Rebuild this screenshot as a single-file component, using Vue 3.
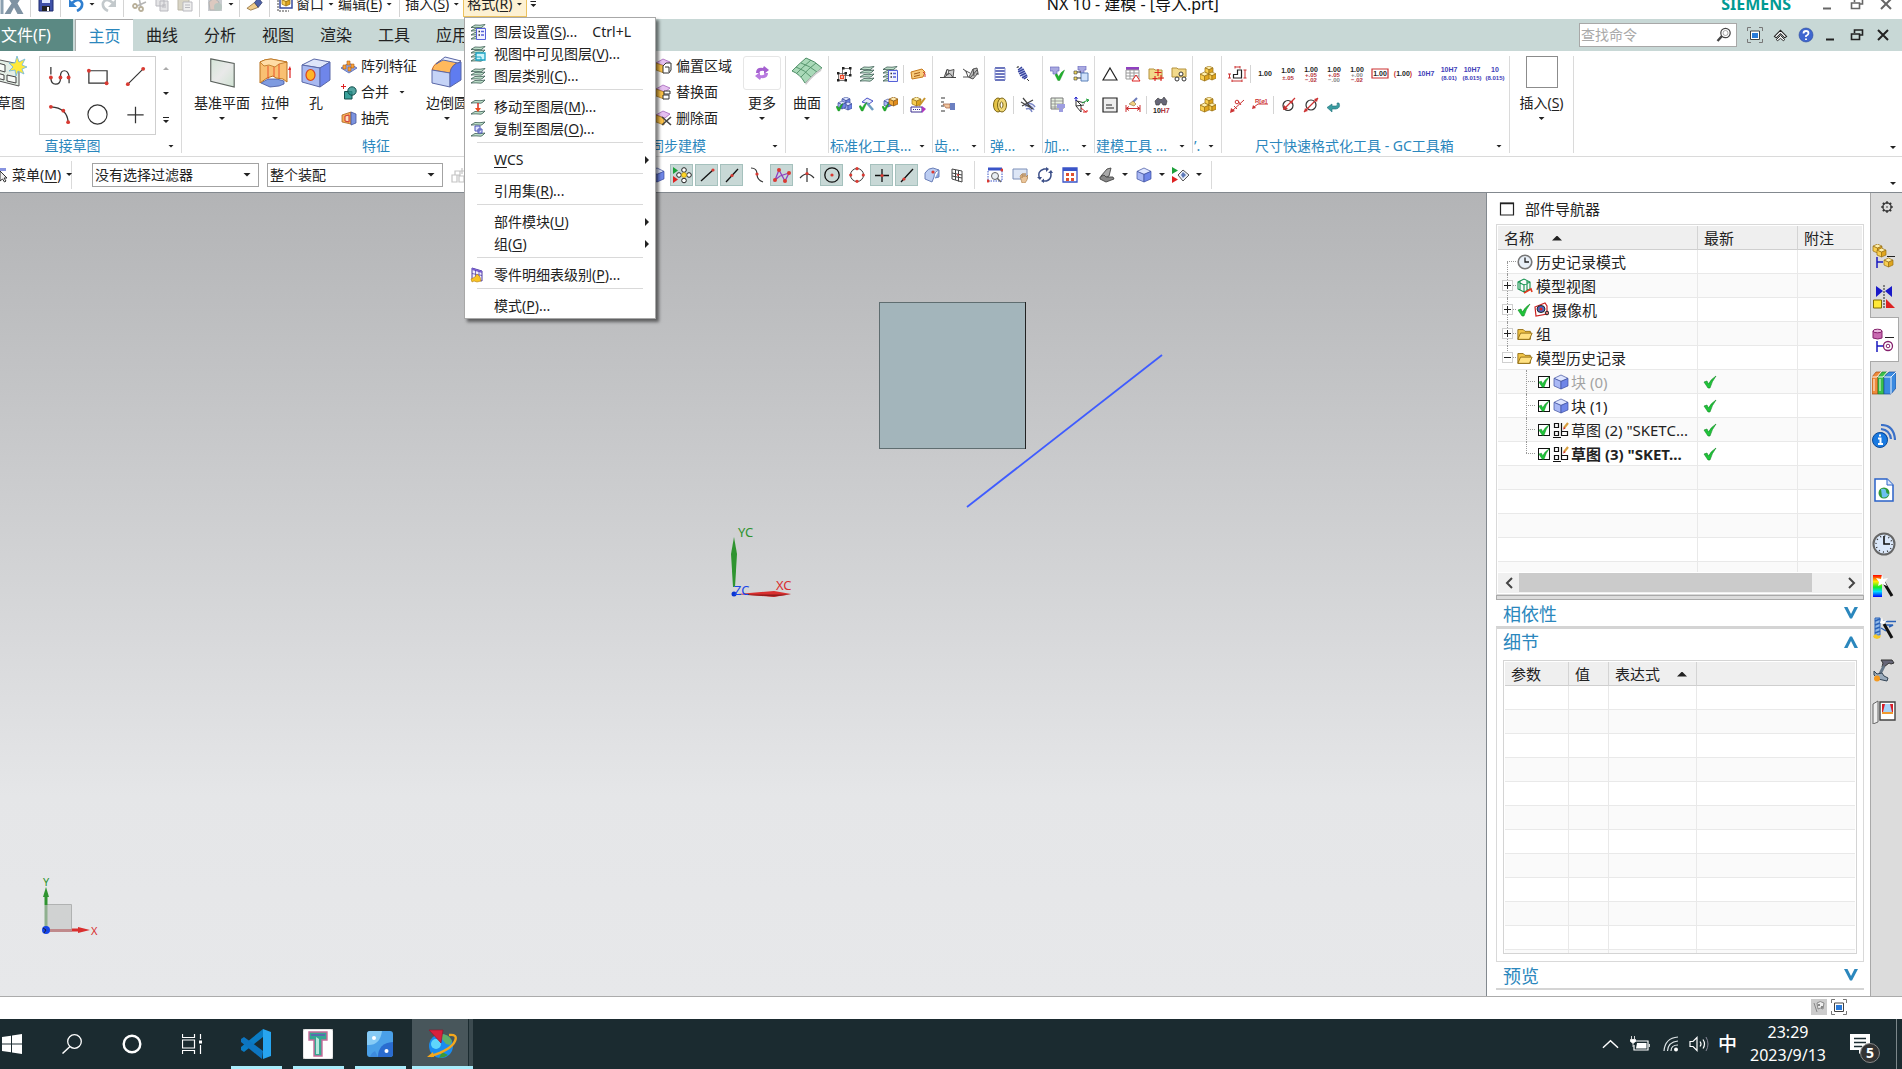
<script setup>
import { h } from 'vue'

const cube = (x, y, s, c = ['#dfe6ff', '#a9b8f5', '#6f86e8', '#3e4f9e']) => {
  const a = x + s / 2, b = x + s, q = y + s * 0.24, m = y + s * 0.46, d = y + s * 0.78, e = y + s
  return `<g stroke="${c[3]}" stroke-width=".7" stroke-linejoin="round"><path fill="${c[0]}" d="M${a} ${y}L${b} ${q}L${a} ${m}L${x} ${q}z"/><path fill="${c[1]}" d="M${x} ${q}L${a} ${m}V${e}L${x} ${d}z"/><path fill="${c[2]}" d="M${b} ${q}L${a} ${m}V${e}L${b} ${d}z"/></g>`
}
const gold = ['#fff0ae', '#f9cf52', '#dfa51f', '#9a7012']
const dot = (x, y, r = 1.6) => `<circle cx="${x}" cy="${y}" r="${r}" fill="#d93a32"/>`
const leaf = (y) => `<path d="M1 ${y + 3}Q4 ${y + 1} 5 ${y + 0.5}Q10 ${y + 1.2} 15 ${y}Q13 ${y + 2.4} 11 ${y + 3.2}Q6 ${y + 2.6} 1 ${y + 3}z" fill="#c4e6d0" stroke="#35564c" stroke-width=".8"/>`
const layers = leaf(12) + leaf(8) + leaf(4) + leaf(0.5)
const tick = (x, y, s = 1) => `<path d="M${x} ${y + 4 * s}l${2 * s} ${-1 * s}l${2 * s} ${3 * s}q${2 * s} ${-5 * s} ${6 * s} ${-7 * s}q${-2 * s} ${5 * s} ${-5 * s} ${11 * s}h${-2 * s}z" fill="#22b32e" stroke="#12821c" stroke-width=".4"/>`
const list = '<path d="M6.500 4.500h9v11h-9z" fill="#f2f3ff" stroke="#5560d8"/><path d="M8.500 7.500h1.500M8.500 11h1.500" stroke="#333" stroke-width="1.600"/><path d="M11 7.500h3M11 11h3" stroke="#5560d8" stroke-width="1.400"/>'
const num = (t, y = 10, c = '#222', s = 7) => `<text x="10" y="${y}" text-anchor="middle" font-family="Liberation Sans, sans-serif" font-weight="bold" font-size="${s}" fill="${c}">${t}</text>`
const hist = '<path d="M1 3h6l2 2h6v9H1z" fill="#f2c649" stroke="#8f6a10"/><path d="M1 14L4 7h13l-3 7z" fill="#ffe182" stroke="#8f6a10"/>'

const icons = {
  save: ['0 0 16 16', '<path d="M1 1h14v14H1z" fill="#3f51a8" stroke="#1f2c6e"/><path d="M4 1h8v6H4z" fill="#dfe8ff"/><path d="M4 10h8v5H4z" fill="#222"/><path d="M9 11h2v4H9z" fill="#fff"/>'],
  undo: ['0 0 16 16', '<path d="M4 7Q11 1 14 7Q15 12 9 15" fill="none" stroke="#2f7fd0" stroke-width="2.600"/><path d="M1 3v8h8z" fill="#2f7fd0"/>'],
  redo: ['0 0 16 16', '<path d="M12 7Q5 1 2 7Q1 12 7 15" fill="none" stroke="#c3c9cc" stroke-width="2.600"/><path d="M15 3v8H7z" fill="#c3c9cc"/>'],
  cut: ['0 0 16 16', '<path d="M8 2l2 9M15 6L6 10" stroke="#b5b5b5" stroke-width="1.600"/><circle cx="4" cy="10" r="2" fill="none" stroke="#b9b09a" stroke-width="1.800"/><circle cx="10" cy="13" r="2" fill="none" stroke="#b9b09a" stroke-width="1.800"/>'],
  copy: ['0 0 16 16', '<path d="M2 1h8v9H2zM6 5h8v10H6z" fill="#e4e4e6" stroke="#b9b9bf"/><path d="M8 9h4M8 11h4" stroke="#b9b9bf"/>'],
  paste: ['0 0 16 16', '<path d="M1 2h11v12H1z" fill="#d8d4c4" stroke="#bbb7a8"/><path d="M6 6h9v9H6z" fill="#eee" stroke="#b9b9bf"/><path d="M8 9h5M8 11.500h5" stroke="#b9b9bf"/>'],
  ghost: ['0 0 16 16', '<path d="M1 1h14v14H1z" fill="#c9ccd0"/><path d="M2 6l5-4 5 4-2 8H3z" fill="#dcc9c0" stroke="#b3b3b3"/><circle cx="11" cy="11" r="4" fill="#b9c6c0"/>'],
  brush: ['0 0 18 16', '<path d="M1 12l8-6 4 5-8 3z" fill="#f0cd8b" stroke="#8a6a3a" stroke-width=".8"/><path d="M9 6l4-5 4 5-4 5z" fill="#4e63a8" stroke="#2a3768" stroke-width=".8"/>'],
  win: ['0 0 16 16', '<path d="M3 1h12v11H3z" fill="#fff" stroke="#3a4ca0" stroke-width="1.500"/><path d="M1 4v11h11" fill="none" stroke="#444" stroke-dasharray="2 1"/>' + cube(5, 2, 8, gold)],
  layerSet: ['0 0 16 16', layers + list],
  layerView: ['0 0 16 16', layers + '<path d="M6 7h9v7H6z" fill="#c9f4fb" stroke="#1aa3c4" stroke-width="1.300"/><path d="M6 11h5v3" fill="none" stroke="#1aa3c4"/>'],
  layers: ['0 0 16 16', layers],
  layerMove: ['0 0 16 16', leaf(1) + leaf(12) + '<path d="M8 4v6" stroke="#d92b1f" stroke-width="1.500"/><path d="M5 9h6l-3 4z" fill="#f04a1a"/>'],
  layerCopy: ['0 0 16 16', leaf(1) + leaf(12) + '<path d="M5 5h5v5H5zM8 8h4v4H8z" fill="#dfe2ff" stroke="#4a54b8"/>'],
  partsList: ['0 0 16 16', '<path d="M2 1l10 3v10L2 12z" fill="#f3f0ff" stroke="#4b3aa0"/><path d="M2 1l10 3v2L2 3z" fill="#7a5fd0"/><path d="M5.500 3v9M9 4v9M2 6.500l10 2" stroke="#4b3aa0" stroke-width=".7"/><path d="M1 12l4-2 2-3 3 3 1 4-4 1-3-1-2 1z" fill="#f8c326" stroke="#b58010" stroke-width=".6"/>'],
  sketch: ['0 0 32 32', '<path d="M0 3l24 5v22L0 24z" fill="#e4eee6" stroke="#555"/><path d="M3 7l7 2v7l-7-2zM12 19l9 2v6l-9-2zM2 17l7 2v5l-7-2z" fill="#f7faf7" stroke="#444"/><path d="M22 0l2 6 6-3-3 6 5 2-5 2 2 5-6-3-2 5-1-6-6 1 4-4-4-4 6 0z" fill="#ffe93b" stroke="#6cb4e0" stroke-width=".8"/>'],
  spline: ['0 0 24 24', '<path d="M3 2v8M3 13q0 7 5 7t5-6v-2q0-6 4-6t5 6v7" fill="none" stroke="#333" stroke-width="1.300"/>' + dot(3, 13, 2) + dot(13, 13, 2) + dot(21.500, 13, 2)],
  rect: ['0 0 24 24', '<path d="M3 6h19v13H3z" fill="none" stroke="#333" stroke-width="1.300"/>' + dot(3, 6, 2) + dot(21.500, 19, 2)],
  line: ['0 0 24 24', '<path d="M4 20L20 4" stroke="#333" stroke-width="1.200"/>' + dot(4, 20, 2) + dot(20, 4, 2)],
  arc: ['0 0 24 24', '<path d="M3 4Q20 5 21 20" fill="none" stroke="#333" stroke-width="1.300"/>' + dot(3, 4, 2) + dot(16, 8, 2) + dot(21, 20, 2)],
  circle: ['0 0 24 24', '<circle cx="12" cy="12" r="10" fill="none" stroke="#333" stroke-width="1.200"/>'],
  plus: ['0 0 24 24', '<path d="M12 4v17M3.500 12.500h17" stroke="#333" stroke-width="1.300"/>'],
  datum: ['0 0 32 32', '<defs><linearGradient id="gd" x2="1" y2="1"><stop stop-color="#d5e6d8"/><stop offset=".5" stop-color="#e9e9e9"/><stop offset="1" stop-color="#cfe2d2"/></linearGradient></defs><path d="M4 2l25 5v25L4 26z" fill="url(#gd)" stroke="#5c635e" stroke-width="1.200"/>'],
  extrude: ['0 0 32 32', '<path d="M2 27l7-4h9l7 2v3l-5 2-9 1z" fill="#7f9be0" stroke="#44549a" stroke-width=".8"/><path d="M1 6q5-3 11-3l16 3v20l-4-3-7-1-3-2-6 2-7 5z" fill="#f9c072" stroke="#b9701c"/><path d="M1 6q5-3 11-3l16 3-8 2-4 3-6-2-5 1z" fill="#ffdca6" stroke="#b9701c" stroke-width=".8"/><path d="M9 10v13M15 11v10M20 8v14" stroke="#e8552d"/><path d="M31 22V12" stroke="#d22" stroke-width="1.200"/><path d="M29 14l2-4 1 4z" fill="#d22"/>'],
  hole: ['0 0 32 32', '<g stroke="#5a68a8"><path d="M2 9l12-6 16 3-10 6z" fill="#dfe6fa"/><path d="M2 9l18 3v19L2 26z" fill="#a9b9f0"/><path d="M20 12l10-6v18l-10 7z" fill="#6f86ea"/></g><ellipse cx="10.500" cy="19" rx="4.500" ry="5.500" fill="#ffb528" stroke="#d8421f" stroke-width="1.200"/>'],
  pattern: ['0 0 16 16', '<path d="M0 10l8-5 8 5-8 5z" fill="#8ea6ea" stroke="#5065b0" stroke-width=".8"/><g fill="#f8a23a" stroke="#b4631a" stroke-width=".6"><path d="M6 3h3v4H6zM2 7h3v4H2zM10 6h3v4h-3zM7 9h3v4H7z"/></g>'],
  unite: ['0 0 16 16', '<path d="M3.500 7.500h7.500V15H3.500z" fill="#3aa19b" stroke="#134f4d"/><circle cx="11" cy="7" r="4.200" fill="#2a8f8a" fill-opacity=".8" stroke="#134f4d"/><path d="M2.500 0v5M0 2.500h5" stroke="#d22"/>'],
  shell: ['0 0 16 16', '<path d="M1 5l9-3v12l-9-2z" fill="#f7ae55" stroke="#a86424" stroke-width=".8"/><path d="M4 6l4-1v7l-4-1z" fill="#fbe0c0" stroke="#c33"/><path d="M10 2l5 2v9l-5 2z" fill="#7b93df" stroke="#44549a" stroke-width=".8"/>'],
  blend: ['0 0 32 32', '<g stroke="#5a68a8"><path d="M1 14Q3 6 14 3l16 2Q20 8 19 17z" fill="#ffb95c" stroke="#c4611c"/><path d="M5 8L14 1l16 4-3 2L12 4z" fill="#e9eefc"/><path d="M1 14l18 3v14L1 27z" fill="#c5d3f6"/><path d="M19 17q1-9 11-11v18l-11 7z" fill="#5f7cf0"/></g>'],
  face1: ['0 0 16 16', '<path d="M0 5l7-4 7 3-5 4z" fill="#e5bff0" stroke="#9a56b0" stroke-width=".7"/><path d="M0 5l8 3v7l-8-3z" fill="#f9c14a" stroke="#a87516" stroke-width=".7"/><path d="M7 8l3-3h5v7l-2 3H7z" fill="#fff" stroke="#333"/><path d="M9 9h4v5" fill="none" stroke="#333"/>'],
  face2: ['0 0 16 16', '<path d="M0 5l7-4 7 3-5 4z" fill="#e5bff0" stroke="#9a56b0" stroke-width=".7"/><path d="M0 5l8 3v7l-8-3z" fill="#f9c14a" stroke="#a87516" stroke-width=".7"/><path d="M8 7h6v3H8zM7 11h6v4H7z" fill="#fff" stroke="#333"/>'],
  face3: ['0 0 16 16', '<path d="M0 5l7-4 7 3-5 4z" fill="#e5bff0" stroke="#9a56b0" stroke-width=".7"/><path d="M0 5l8 3v7l-8-3z" fill="#f9c14a" stroke="#a87516" stroke-width=".7"/><path d="M6 7l9 8M15 7l-9 8" stroke="#444" stroke-width="1.600"/>'],
  more: ['0 0 16 16', '<path d="M2 8Q2 2 9 3l1-2 5 4-5 4V6Q6 5 5 8z" fill="#a560d0"/><path d="M14 8q0 6-7 5l-1 2-5-4 5-4v3q4 1 5-2z" fill="#b97be0"/>'],
  surface: ['0 0 32 32', '<path d="M1 15Q8 8 15 2Q24 5 31 12Q23 17 14 27Q9 18 1 15z" fill="#a9d9b8" stroke="#4f8e67"/><path d="M5 11Q14 14 20 21M10 7Q19 10 26 16M6 17Q13 10 20 4M10 21Q17 13 25 7" fill="none" stroke="#4f8e67" stroke-width=".9"/><path d="M14 27Q23 17 31 12l-1 3Q22 20 15 29z" fill="#ccc"/>'],
  gc1: ['0 0 16 16', '<path d="M2.500 7.500h7v7h-7zM6.500 2.500h8v7h-8z" fill="#fff" stroke="#555" stroke-width=".8"/><path d="M4.500 9.500h3v3h-3z" fill="#fff" stroke="#f04a2a" stroke-width="1.400"/><g fill="#222"><path d="M1 6h2.500v2.500H1zM8.500 6H11v2.500H8.500zM1 13h2.500v2.500H1zM8.500 13H11v2.500H8.500zM13 1h2.500v2.500H13zM6 1h2.500v2.500H6zM13 8h2.500v2.500H13z"/></g>'],
  tag: ['0 0 16 16', '<path d="M1 6l11-3 3 3-2 5-11 2z" fill="#f9cb7a" stroke="#c67a1c"/><path d="M4 8l6-1.500M4 10.500l6-1.500" stroke="#a35b16"/><path d="M13 6q3 1 2 5" fill="none" stroke="#c33"/>'],
  chkBlue: ['0 0 16 16', cube(6, 0, 8) + cube(8, 5, 8) + cube(2, 4, 8) + tick(0, 7, .7)],
  chkTool: ['0 0 16 16', '<path d="M3 5l5-4 6 3-4 3z" fill="#e9e9f9" stroke="#4a54c8"/><path d="M8 6l6 7" stroke="#6e9dc0" stroke-width="2.500"/>' + tick(0, 6, .8)],
  chkGold: ['0 0 16 16', cube(2, 2, 8) + cube(7, 0, 9, ['#ffe9b0', '#f2a93a', '#e08b1c', '#8f5a10']) + tick(0, 7, .7)],
  boxEdit: ['0 0 16 16', cube(2, 0, 9, gold) + '<path d="M15 1L9 9" stroke="#c8952c" stroke-width="2"/><path d="M1 10h11v5H1z" fill="#fff" stroke="#3b2d90"/><path d="M3 12.500h7" stroke="#3b2d90" stroke-dasharray="1 1"/><path d="M12 9l4 3-4 4z" fill="#b03ac0"/>'],
  gear1: ['0 0 16 16', '<path d="M0 11.500h4l3-8 3 1 4-1-1 8zM7 3.500l-1 5 4-1 3 4M4 11.500l5-4M9 4l-1 4" fill="#ccc" stroke="#444" stroke-width=".9"/><path d="M11 11.500h5" stroke="#444"/>'],
  gear2: ['0 0 16 16', '<path d="M0 3l3 2 2 6 5 2 5-6-1-5-4 1-4 8M3 5l4 2M10 3l1 7M7 12l7-8M0 11h5M13 8h3" fill="#bbb" stroke="#444" stroke-width=".9"/>'],
  gearHand: ['0 0 16 16', '<path d="M1 1h4M1 5h3M1 9h3M1 14h4" stroke="#333"/><path d="M3 7h7v4H6z" fill="#f2c6a0" stroke="#9c5a3c" stroke-width=".7"/><path d="M10 6h5v7h-5z" fill="#6b7fc0"/>'],
  spring1: ['0 0 16 16', '<path d="M3 2h10M3 5h10M3 8h10M3 11h10M3 14h10" stroke="#3c4aa8" stroke-width="1.700"/><path d="M3 2v12M13 2v12" stroke="#8c96d8"/>'],
  spring2: ['0 0 16 16', '<path d="M5 3l6 9" stroke="#9aa4dc" stroke-width="5"/><path d="M3 4l4-3M3 6l6-3M4 8l6-3M5 10l6-3M7 12l5-3M9 13l3-2" stroke="#2f3c98" stroke-width="1.200"/><path d="M12 13l2 2M2 2q0-2 2-1" stroke="#333" fill="none"/>'],
  spring3: ['0 0 16 16', '<ellipse cx="6" cy="8" rx="4.500" ry="7" fill="#e4c347" stroke="#7b6414"/><ellipse cx="10" cy="8" rx="4.500" ry="7" fill="#f0d878" stroke="#7b6414"/><ellipse cx="9.500" cy="8" rx="1.500" ry="3" fill="#fff" stroke="#7b6414"/>'],
  spring4: ['0 0 16 16', '<path d="M6 7q6-2 9 3M5 9q6-2 9 4M6 12q4-2 6 3" fill="none" stroke="#7c88c8" stroke-width="1.500"/><path d="M3 1l9 11M13 3L2 9M1 5l12 7" stroke="#444" stroke-width="1.200"/>'],
  cam1: ['0 0 16 16', '<path d="M0 1h9v4H7v3H3V5H0z" fill="#a9a9e0" stroke="#6b6bbf" stroke-width=".7"/>' + tick(5, 5, .95)],
  cam2: ['0 0 16 16', '<path d="M5 0h8v4h-2v3H7V4H5z" fill="#a9a9e0" stroke="#6b6bbf" stroke-width=".7"/><path d="M8 7h7v8H8z" fill="#cfe2fb" stroke="#5a80b8"/><path d="M1 5h3v3H1zM1 11h3v3H1z" fill="#f5dc60" stroke="#333" stroke-width=".6"/><path d="M4 6h4M4 12h4" stroke="#333"/>'],
  cam3: ['0 0 16 16', '<path d="M1 1h12v11H1z" fill="#e9f2e2" stroke="#777"/><path d="M1 4h12M1 7h12M1 10h12M5 1v11" stroke="#888" stroke-width=".8"/><path d="M7 7h8v4h-2v4H9v-4H7z" fill="#9d9de0"/>'],
  cam4: ['0 0 16 16', '<path d="M3 3v6l5 6V8zM3 9l8-1M4 4l8 2" fill="none" stroke="#333"/><path d="M9 6l6-3M13 2l3 1-2 2" stroke="#1da03a" fill="none"/><path d="M8 11l5 4M10 15h4v-2" stroke="#d22" fill="none"/><path d="M3 0v4M1.500 2L3 0l1.500 2" stroke="#22c" fill="none"/>'],
  tri: ['0 0 16 16', '<path d="M8 2l7 12H1z" fill="none" stroke="#222" stroke-width="1.200"/>'],
  tbl: ['0 0 16 16', '<path d="M1 1h13v3H1z" fill="#9040c0"/><path d="M1 4h13v9H1zM1 7h13M1 10h13M5 4v9M9 4v9" fill="none" stroke="#999"/><path d="M11 9l4 6H7z" fill="#fff" stroke="#d22"/>'],
  folderX: ['0 0 16 16', '<path d="M1 3h5l1 1h7v9H1z" fill="#f2d98a" stroke="#b4923c"/><path d="M10 3v7M6.500 6.500h7M13 9v6M10 12h6M7 10v5M4.500 12.500h5" stroke="#d22" stroke-width="1.100"/>'],
  folderO: ['0 0 16 16', '<path d="M1 2h5l1 1h8v8H1z" fill="#f2d98a" stroke="#b4923c"/><g fill="#fff" stroke="#333"><circle cx="10" cy="8" r="2"/><circle cx="6" cy="13" r="2"/><circle cx="13" cy="13" r="2"/></g>'],
  note: ['0 0 16 16', '<path d="M1 1h14v14H1z" fill="#eee" stroke="#222" stroke-width="1.200"/><path d="M4 8h6M4 11h8" stroke="#222"/>'],
  dimBrush: ['0 0 16 16', '<path d="M1 8v7M15 8v7M1 11.500h14" stroke="#c33"/><path d="M4 9.500l-3 2 3 2M12 9.500l3 2-3 2" fill="none" stroke="#c33"/><path d="M12 1L8 5" stroke="#6b7ab8" stroke-width="2"/><path d="M4 7l4-3 3 3-2 2z" fill="#f0d080" stroke="#8a6a3a" stroke-width=".6"/>'],
  find: ['0 0 20 16', '<path d="M4 4l3-3 2 1.500h2L13 0l3 4-1 4h-3l-2-3-2 3H5z" fill="#667" stroke="#333" stroke-width=".6"/><text x="2" y="16" font-family="Liberation Sans, sans-serif" font-weight="bold" font-size="7" fill="#222">10<tspan fill="#b5333c">H7</tspan></text>'],
  cubes: ['0 0 16 16', cube(5, 0, 8, gold) + cube(8, 6, 8, gold) + cube(0, 6, 9, gold)],
  dim: ['0 0 20 16', '<path d="M6.500 12V8.500h4V4h4v8z" fill="none" stroke="#222" stroke-width="1.200"/><path d="M8 1h5M8 0v2.500M13 0v2.500M18 4v8M16.500 4h3M16.500 12h3M5 15h10M5 13.500v2.500M15 13.500v2.500M2.500 8v4M1 8h3M1 12h3" stroke="#c33"/>'],
  d1: ['0 0 20 16', num('1.00')],
  d2: ['0 0 20 16', num('1.00', 7) + num('±.05', 14, '#b5333c', 6)],
  d3: ['0 0 20 16', num('1.00', 6) + num('+.05', 11, '#b5333c', 6) + num('−.02', 16, '#b5333c', 6)],
  d4: ['0 0 20 16', num('1.00', 6) + num('+.05', 11, '#b5333c', 6) + num('−.00', 16, '#888', 6)],
  d5: ['0 0 20 16', num('1.00', 6) + num('+.00', 11, '#888', 6) + num('−.02', 16, '#b5333c', 6)],
  d6: ['0 0 20 16', '<path d="M2 3h16v9H2z" fill="none" stroke="#c33" stroke-width="1.200"/>' + num('1.00')],
  d7: ['0 0 20 16', num('<tspan fill="#c33">(</tspan>1.00<tspan fill="#c33">)</tspan>')],
  d8: ['0 0 20 16', num('10H7', 10, '#4040b8')],
  d9: ['0 0 20 16', num('10H7', 6, '#4040b8') + num('(8.01)', 14, '#4040b8', 6)],
  d10: ['0 0 20 16', num('10H7', 6, '#4040b8') + num('(8.015)', 14, '#4040b8', 6)],
  d11: ['0 0 20 16', num('10', 6, '#4040b8') + num('(8.015)', 14, '#4040b8', 6)],
  rad1: ['0 0 16 16', '<path d="M3 14L15 3M5 9l3 3M9 4l3 4" stroke="#c33"/><path d="M1 16l1-5 4 3z" fill="#c33"/><circle cx="8" cy="5" r="1.800" fill="none" stroke="#c33"/>'],
  rad2: ['0 0 16 16', '<path d="M2 10l4-3h10" fill="none" stroke="#c33"/><path d="M0 12l1-4 3 3z" fill="#c33"/><text x="3" y="6" font-family="Liberation Sans, sans-serif" font-size="6" font-weight="bold" fill="#c33">R[ø]</text>'],
  dia1: ['0 0 16 16', '<circle cx="8" cy="8.500" r="5" fill="none" stroke="#333" stroke-width="1.200"/><path d="M4 12L15 1" stroke="#c33" stroke-width="1.300"/><path d="M3 13l1-5 4 4zM13 4l-1 3-3-3z" fill="#c33"/>'],
  dia2: ['0 0 16 16', '<circle cx="8" cy="8" r="5" fill="none" stroke="#333" stroke-width="1.200"/><path d="M1 15L15 1" stroke="#c33" stroke-width="1.300"/><path d="M15 1l-1 4-3-3zM1 15l1-4 3 3z" fill="#c33"/>'],
  back: ['0 0 16 16', '<path d="M13 6q2 5-3 6H6v3L1 10.500 6 7v2h4q2 0 1-3z" fill="#3a9ca0" stroke="#20707a" stroke-width=".6"/>'],
  menuI: ['0 0 16 16', '<path d="M0 1h14v3H0z" fill="#8894e0"/><path d="M0 6h8M0 9h8M0 12h8" stroke="#555"/><path d="M8 4v10l2.500-2 2 3 1.500-1-2-3h3z" fill="#eee" stroke="#333"/>'],
  filt: ['0 0 16 16', '<path d="M1 8h5v7H1zM8 9h5v6H8zM4 4h5v4H4zM11 1v6M8 4h6" fill="none" stroke="#c4c4c4" stroke-width="1.200"/>'],
  bcube: ['0 0 16 16', cube(1, 1, 14)],
  snap: ['0 0 20 20', '<path d="M1 2l5 3.500-5 3.500z" fill="#1da03a"/><path d="M1 11l5 3.500-5 3.500z" fill="#d22"/><g fill="#fff" stroke="#222"><circle cx="12" cy="5" r="2.300"/><circle cx="12" cy="15.500" r="2.300"/><circle cx="7" cy="10" r="2.300"/><circle cx="17" cy="10" r="2.300"/></g><circle cx="12" cy="10" r="2.500" fill="#ffd62a" stroke="#a80" stroke-width=".5"/>'],
  s1: ['0 0 16 16', '<path d="M2 14L14 3" stroke="#111" stroke-width="1.300"/>' + dot(14, 3)],
  s2: ['0 0 16 16', '<path d="M2 15L14 2" stroke="#111" stroke-width="1.300"/>' + dot(8, 8.500)],
  s3: ['0 0 16 16', '<path d="M2 1q6 0 6 6t6 8" fill="none" stroke="#333" stroke-width="1.200"/>' + dot(8, 7)],
  s4: ['0 0 18 16', '<path d="M2 13L6 3l6 11 4-8-9 3z" fill="none" stroke="#9040c0" stroke-width="1.300"/>' + dot(2, 13, 2) + dot(6, 3, 2) + dot(12, 14, 2) + dot(16, 6, 2)],
  s5: ['0 0 16 16', '<path d="M8 1v14M1 11q7-8 14 0" fill="none" stroke="#333" stroke-width="1.200"/>' + dot(8, 6.500)],
  s6: ['0 0 16 16', '<circle cx="8" cy="8" r="7.200" fill="none" stroke="#111" stroke-width="1.300"/>' + dot(8, 8)],
  s7: ['0 0 16 16', '<circle cx="8" cy="8" r="6.500" fill="none" stroke="#333"/>' + dot(8, 1.700) + dot(8, 14.300) + dot(1.700, 8) + dot(14.300, 8)],
  s8: ['0 0 16 16', '<path d="M8 2v13M1 8.500h14" stroke="#111" stroke-width="1.300"/>' + dot(8, 8.500)],
  s9: ['0 0 16 16', '<path d="M2 15L14 2" stroke="#111" stroke-width="1.300"/>' + dot(5, 12)],
  s10: ['0 0 16 16', '<path d="M1 6q3-5 8-5l6 2q-5 2-5 7l-2 5-7-3z" fill="#bccdf2" stroke="#6a7fb8"/><path d="M15 3v7l-4 1" fill="#8ea6e0" stroke="#6a7fb8"/>' + dot(9, 5)],
  s11: ['0 0 16 16', '<path d="M3 2l10 2v11L3 12zM6.500 3v10M9.500 3.500v11M3 6l10 2M3 9l10 2" fill="none" stroke="#444"/>' + dot(9, 8, 1)],
  v1: ['0 0 16 16', '<path d="M1 2h14" stroke="#3a54c8" stroke-width="3"/><path d="M1 4v10h14V4" fill="none" stroke="#3a54c8" stroke-dasharray="1.500 1"/><circle cx="8" cy="9" r="3.500" fill="#e8eef2" stroke="#666"/><path d="M10 11l4 4" stroke="#666" stroke-width="1.500"/>' + dot(1, 14) + dot(15, 3)],
  v2: ['0 0 16 16', '<path d="M1 2h14v10H1z" fill="#dde6f6" stroke="#7d8fb8"/><path d="M8 9l2-2v4l1-5 1 4 1-4 1 4 2-2-1 5-2 3h-3z" fill="#e9c49a" stroke="#a8763c" stroke-width=".6"/>'],
  v3: ['0 0 16 16', '<path d="M2.500 11Q0 4 7 2h2M13.500 5q2 7-4 9H7" fill="none" stroke="#3c4f88" stroke-width="1.500"/><path d="M9 0l3 2-3 3zM7 11.500l-3 2.500 3 2zM0 10l3 3 2-3zM11 6l3-3 2 3z" fill="#3c4f88"/>'],
  v4: ['0 0 16 16', '<path d="M1 1h14v14H1z" fill="#fff" stroke="#3a54c8" stroke-width="1.300"/><path d="M1 2.500h14" stroke="#3a54c8" stroke-width="3"/><path d="M4 6h3v3H4zM9 6h3v3H9zM4 11h3v3H4zM9 11h3v3H9z" fill="#e05030"/>'],
  v5: ['0 0 16 16', '<path d="M2 9l6-7 4-1-2 8-4 2z" fill="#aaa" stroke="#444" stroke-width=".9"/><path d="M1 10l4-2 2 2h7l1 2-8 3-6-3z" fill="#888" stroke="#444" stroke-width=".9"/>'],
  v6: ['0 0 18 16', '<path d="M0 0l6 3.500L0 7z" fill="#1da03a"/><path d="M0 9l6 3.500L0 16z" fill="#d22"/><path d="M6 8l5-5 6 5-6 6z" fill="#e8eef8" stroke="#555"/><path d="M11 5l3 3-3 3-2-3z" fill="#5d79b8"/>'],
  fit: ['0 0 16 16', '<path d="M.500 4V.500H4M12 .500h3.500V4M15.500 12v3.500H12M4 15.500H.500V12" fill="none" stroke="#777"/><path d="M3.500 4h9v8.500h-9z" fill="#fff" stroke="#444"/><path d="M5 6h6v5H5z" fill="#2a7ad8"/>'],
  flag: ['0 0 16 16', '<path d="M0 0h16v16H0z" fill="#ccc"/><path d="M3 4l3 9M6 4q3-3 7 0l-1 6q-3-2-5 0z" fill="#eee" stroke="#888"/><path d="M7 5h2v2H7zM10 7h2v2h-2z" fill="#888"/>'],
  up2: ['0 0 16 16', '<path d="M1.500 9L8 2.500 14.500 9l-2 1.500L8 6l-4.500 4.500z" fill="#fff" stroke="#222" stroke-width="1.100"/><path d="M3.500 12.500L8 8l4.500 4.500-1.500 1L8 11l-3 2.500z" fill="#fff" stroke="#222"/>'],
  help: ['0 0 16 16', '<circle cx="8" cy="8" r="7" fill="#3f66cf" stroke="#2a489a" stroke-width=".6"/><path d="M5.500 6.500q0-2.500 2.500-2.500t2.500 2.200Q10.500 7.500 8 9v1M8 11.500v1.500" fill="none" stroke="#fff" stroke-width="1.800"/>'],
  mag: ['0 0 16 16', '<circle cx="9.500" cy="6" r="4.700" fill="#fff" stroke="#444" stroke-width="1.200"/><circle cx="9.500" cy="6" r="2.500" fill="none" stroke="#888" stroke-width=".7"/><path d="M6 9l-4.500 5" stroke="#444" stroke-width="2.400"/>'],
  min: ['0 0 14 14', '<path d="M2 11.500h8" stroke="currentColor" stroke-width="2"/>'],
  restore: ['0 0 14 14', '<path d="M4.500 5V2h8v5H10" fill="none" stroke="currentColor" stroke-width="1.600"/><path d="M1.500 6h8v5.500h-8z" fill="none" stroke="currentColor" stroke-width="1.600"/>'],
  close: ['0 0 14 14', '<path d="M2 2l10 10M12 2L2 12" stroke="currentColor" stroke-width="2"/>'],
  frame: ['0 0 16 16', '<path d="M1.500 2h13v12h-13z" fill="#fff" stroke="#222" stroke-width="1.200"/><path d="M1 2.500h14" stroke="#222" stroke-width="1.500"/>'],
  clock: ['0 0 16 16', '<circle cx="8" cy="8" r="6.800" fill="#e9f0f8" stroke="#777" stroke-width="1.600"/><path d="M8 3.500V8h4" fill="none" stroke="#222" stroke-width="1.300"/>'],
  model: ['0 0 16 16', '<path d="M1 4l6-3 6 3v7l-6 3-6-3zM1 4l6 3 6-3M7 7v7M3 2.500v9M10 3v9" fill="none" stroke="#13924e" stroke-width="1.100"/><path d="M7 15l7-4 1 3" fill="none" stroke="#e03a20" stroke-width="1.600"/>'],
  camera: ['0 0 16 16', '<path d="M2 5l10-4 2 3v8L3 14z" fill="#fff" stroke="#c22" stroke-width="1.200"/><ellipse cx="8" cy="7" rx="4" ry="3.500" fill="#5065c0" stroke="#222"/><circle cx="8" cy="7" r="1.500" fill="#d22"/><circle cx="14" cy="11" r="1.800" fill="none" stroke="#222"/>'],
  folder: ['0 0 18 16', hist],
  block: ['0 0 16 16', cube(1, 1, 14)],
  skt: ['0 0 16 16', '<path d="M1.500 1.500h4v4h-4zM1.500 9.500h4v4h-4zM8.500 1v12.500h6v-4h-6M0 15.500h8" fill="none" stroke="#111" stroke-width="1.200"/><path d="M15 1l-4 5" stroke="#d8a040" stroke-width="2.200"/><path d="M11 5l-1 2.500 2.500-1z" fill="#c22"/>'],
  ok: ['0 0 14 14', '<path d="M1 7l3-1 1.500 3Q8 4 13 1Q9 6 7 13H5z" fill="#1fc43a" stroke="#128a24" stroke-width=".6"/>'],
  chevD: ['0 0 16 14', '<path d="M1 1h3.500L8 8l3.500-7H15L9 12.500H7z" fill="#2b87bd"/>'],
  chevU: ['0 0 16 14', '<path d="M1 13h3.500L8 6l3.500 7H15L9 1.500H7z" fill="#2b87bd"/>'],
  cog: ['0 0 24 24', '<circle cx="12" cy="12" r="5" fill="none" stroke="#333" stroke-width="1.500"/><path d="M12 5v3M12 16v3M5 12h3M16 12h3M7 7l2 2M15 15l2 2M17 7l-2 2M9 15l-2 2" stroke="#333" stroke-width="2"/><circle cx="12" cy="12" r="1" fill="#333"/>'],
  asm: ['0 0 24 24', cube(1, 0, 9, gold) + cube(5, 4, 9, gold) + '<path d="M5 13v11M5 18h6" stroke="#1a1ac0" stroke-width="1.500"/><path d="M15 12.500h8" stroke="#222"/>' + cube(12, 14, 9, gold)],
  mirror: ['0 0 24 24', '<path d="M4 1l7 5-7 6zM20 1l-7 5 7 6z" fill="#1a1ac8"/><path d="M12 0v24" stroke="#222" stroke-dasharray="2 1"/><path d="M1.500 15h8v8h-8z" fill="#ffe838" stroke="#806c00"/><path d="M14 14l9 9h-9z" fill="#d22"/>'],
  partNav: ['0 0 24 24', '<path d="M1 3v7q5 2 9 0V3z" fill="#c86ab0" stroke="#85206c"/><ellipse cx="5.500" cy="3" rx="4.500" ry="1.800" fill="#e9b8dc" stroke="#85206c"/><path d="M5 13v11M5 18h6" stroke="#1a1ac0" stroke-width="1.500"/><path d="M13 9.500h9" stroke="#222"/><circle cx="16" cy="18" r="4.500" fill="#fff" stroke="#85206c" stroke-width="1.300"/><circle cx="16" cy="18" r="1.800" fill="none" stroke="#85206c"/>'],
  books: ['0 0 24 24', '<path d="M0 6l4-5h5L6 6v17H0z" fill="#f08a3a" stroke="#a04a10" stroke-width=".7"/><path d="M6 6l4-5h5l-3 5v17H6z" fill="#3ac04a" stroke="#1a7a28" stroke-width=".7"/><path d="M12 6l5-5h7v16l-5 6h-7z" fill="#3a8ae0" stroke="#1a4a98" stroke-width=".7"/><path d="M0 6h5l4-5M6 6h5l4-5M12 6h7l5-5M19 6v17M2 8v12M8 8v12" fill="none" stroke="#fff" stroke-width=".9"/>'],
  info: ['0 0 24 24', '<path d="M9 1q13 0 14 15M9 5q9 1 10 10M9 9q5 1 6 6" fill="none" stroke="#3a70c8" stroke-width="2.200"/><circle cx="8" cy="16" r="7.500" fill="#1a7ae0" stroke="#0c4a98"/><path d="M8 10.500v2M6 14.500h2.500V20M6 20h5" stroke="#fff" stroke-width="2" fill="none"/>'],
  doc: ['0 0 24 24', '<path d="M3 1h12l6 6v16H3z" fill="#fff" stroke="#2a62c8" stroke-width="1.500"/><path d="M15 1v6h6" fill="#dce8fb" stroke="#2a62c8"/><circle cx="12" cy="15" r="5.500" fill="#2e9a3a"/><path d="M9 11q5-1 5 2t3 3q-3 5-7 3z" fill="#6cc0f0"/>'],
  bigClock: ['0 0 24 24', '<circle cx="12" cy="12" r="10.500" fill="#dbe8fa" stroke="#666" stroke-width="2"/><path d="M12 4v8h6" fill="none" stroke="#111" stroke-width="1.600"/><circle cx="12" cy="12" r="8" fill="none" stroke="#333" stroke-width="1.500" stroke-dasharray="1 3.200"/>'],
  rainbow: ['0 0 24 24', '<defs><linearGradient id="rb" x2="0" y2="1"><stop stop-color="#f00"/><stop offset=".3" stop-color="#fe0"/><stop offset=".55" stop-color="#1e2"/><stop offset=".75" stop-color="#0df"/><stop offset="1" stop-color="#00f"/></linearGradient></defs><path d="M1 1h9v22H1z" fill="url(#rb)"/><path d="M11 7l9 15" stroke="#111" stroke-width="3"/><path d="M10 0l1 5 5-1-3 4 2 4-5-2-4 2 1-4-3-4 5 1z" fill="#fff"/>'],
  wand: ['0 0 24 24', '<path d="M3 2h5v17H3z" fill="#8fb8e8" stroke="#2a62b8"/><path d="M3 5l5-2M3 9l5-2M3 13l5-2M3 17l5-2M9 5.500h15M13 9h8l-4 2M9 12l5 3" stroke="#2a62b8" stroke-width="1.400" fill="none"/><path d="M1 20l3-2 2 2 3-1-1 3-3 1-3-1z" fill="#f5c92a"/><path d="M12 8l8 14" stroke="#111" stroke-width="3"/><path d="M10 1l1 4 4-1-3 4-4-1z" fill="#fff"/>'],
  robot: ['0 0 24 24', '<path d="M9 2h11l2 3-3 1-2-1-5 4h-2l1-4z" fill="#667" stroke="#333"/><path d="M12 8l-4 8" stroke="#678" stroke-width="3"/><path d="M2 13l3 3 5-1 2 3 4 2-1 3-9-2-4-4z" fill="#9ab" stroke="#345"/><circle cx="5" cy="20.500" r="3" fill="#f59a20"/>'],
  gallery: ['0 0 24 24', '<path d="M8 2h15v18H8z" fill="#fff" stroke="#444" stroke-width="1.400"/><path d="M10 4h11v10H10z" fill="#d81e28"/><path d="M13 4h5l2 8H11z" fill="#a8d4fa"/><path d="M10 12h11v2H10z" fill="#f09a30"/><path d="M6 1v21l-5 2V4z" fill="#eee" stroke="#666"/>'],
  start: ['0 0 20 20', '<path fill="#fff" d="M0 3l9-1.300V9.500H0zM10 1.500L20 0v9.500H10zM0 10.500h9v7.800L0 17zM10 10.500h10V20l-10-1.500z"/>'],
  tsearch: ['0 0 20 20', '<circle cx="12.500" cy="7.500" r="6.800" fill="none" stroke="#fff" stroke-width="1.300"/><path d="M8 12.500L.500 19.500" stroke="#fff" stroke-width="1.500"/>'],
  cortana: ['0 0 20 20', '<circle cx="10" cy="10" r="8.300" fill="none" stroke="#fff" stroke-width="2.400"/>'],
  taskview: ['0 0 20 20', '<path d="M.500 0v3.500h12V0M.500 20v-3.500h12V20M.500 6h12v8H.500zM18.500 0v5M18.500 11v9" fill="none" stroke="#fff" stroke-width="1.200"/><path d="M17 6.500h3v3h-3z" fill="#fff"/>'],
  code: ['0 0 30 30', '<path d="M22 8L3 23l-3-2v-3L22 0z" fill="#0a7cc4"/><path d="M3 8L0 10v3l21 17 1-8z" fill="#0d75c0"/><path d="M22 0l8 3v24l-8 3z" fill="#27a5f0"/>'],
  typora: ['0 0 30 30', '<rect width="30" height="30" rx="2" fill="#fff" stroke="#ccc"/><path d="M6 3h18v8h-5v16h-8V11H6z" fill="#35a893" stroke="#c86a9a" stroke-width="1.400"/><path d="M8 5h14v2H8z" fill="#5a6ab0"/><path d="M13 8l3 2v15h-3z" fill="#b5e6dc"/>'],
  photo: ['0 0 26 26', '<rect width="26" height="26" rx="3" fill="#4aa0e8"/><path d="M0 14Q13 15 15 0H3Q0 0 0 3z" fill="#86cbf6"/><path d="M11 26q0-14 15-15v12q0 3-3 3z" fill="#2a6cd0"/><path d="M3 26q1-4 5-6l3 6z" fill="#2a6cd0" opacity=".4"/><circle cx="7" cy="7" r="2" fill="#fff"/><circle cx="19.500" cy="20" r="2" fill="#fff"/>'],
  nx: ['0 0 30 30', '<circle cx="14" cy="17" r="12" fill="#1a8cf0"/><path d="M14 5q8 0 11 7l-2 4-4-1-4-5z" fill="#5fae6a"/><path d="M12 29l3-6 6 3q-4 3-9 3z" fill="#3a9a3a"/><circle cx="9" cy="15" r="5" fill="#6fe8ff" opacity=".8"/><path d="M22 6q9-1 6 6-4 9-24 15" fill="none" stroke="#f5a81c" stroke-width="2.400"/><path d="M0 28l6-5 1 5z" fill="#f5a81c"/><path d="M2 1l14 0-2 13z" fill="#d8203c" stroke="#90102a" stroke-width=".6"/>'],
  tup: ['0 0 18 10', '<path d="M1 9l8-7.500L17 9" fill="none" stroke="#fff" stroke-width="1.500"/>'],
  batt: ['0 0 20 16', '<path d="M5 5h13v9H4V9" fill="none" stroke="#fff" stroke-width="1.200"/><path d="M7 7h9.500v5.500H6z" fill="#fff"/><path d="M19.300 8v3" stroke="#fff"/><path d="M1.500 0v3M4.500 0v3M.500 3.500h5v2l-2 1.500h-1l-2-1.500zM3 7v4" fill="#fff" stroke="#fff" stroke-width=".8"/>'],
  wifi: ['0 0 16 16', '<path d="M1 15Q2 2 15 1M4.500 15Q5 6 15 5M8 15Q8 9 15 9" fill="none" stroke="#dfe6e8" stroke-width="1.200"/><circle cx="13" cy="13.500" r="2" fill="#fff"/>'],
  vol: ['0 0 20 16', '<path d="M1 5.500h3l4-4v13l-4-4H1z" fill="none" stroke="#fff" stroke-width="1.200"/><path d="M11 5.500q2 2.500 0 5M14 3.500q3 4.500 0 9" fill="none" stroke="#fff" stroke-width="1.200"/><path d="M17 1q4 7 0 14" fill="none" stroke="#889"/>'],
  action: ['0 0 20 20', '<path d="M0 0h20v16h-6l-5 4v-4H0z" fill="#fff"/><path d="M4 4.500h12M4 8.500h12M4 12.500h8" stroke="#1b2c32" stroke-width="1.300"/>'],
  logo: ['0 0 26 20', '<path d="M0 0h3v20H0z" fill="#8ba0b0"/><path d="M5 0h6l3.500 6L18 0h5l-6 9.500L23 20h-6l-3.500-6.500L10 20H4l7-10.500z" fill="#7f93a3"/>'],
}
const Ic = (p) => h('svg', { viewBox: icons[p.n][0], width: p.w || 16, height: p.t || p.w || 16, innerHTML: icons[p.n][1], 'aria-hidden': 'true' })
Ic.props = ['n', 'w', 't']

const tabs = ['主页', '曲线', '分析', '视图', '渲染', '工具', '应用']
const sketchTools = ['spline', 'rect', 'line', 'arc', 'circle', 'plus']
const gcGroups = [
  { cls: 'g-std', label: '标准化工具...', rows: [['gc1', 'layers', 'layerSet', '|', 'tag'], ['chkBlue', 'chkTool', 'chkGold', '|', 'boxEdit']] },
  { cls: 'g-gear', label: '齿...', rows: [['gear1', 'gear2'], ['gearHand']] },
  { cls: 'g-spring', label: '弹...', rows: [['spring1', 'spring2'], ['spring3', '|', 'spring4']] },
  { cls: 'g-cam', label: '加...', rows: [['cam1', 'cam2'], ['cam3', 'cam4']] },
  { cls: 'g-model', label: '建模工具 ...', rows: [['tri', 'tbl', 'folderX', 'folderO'], ['note', 'dimBrush', '|', 'find']] },
  { cls: 'g-asm', label: '’.', rows: [['cubes'], ['cubes']] },
  { cls: 'g-dim', label: '尺寸快速格式化工具 - GC工具箱', rows: [['dim', '|', 'd1', 'd2', 'd3', 'd4', 'd5', 'd6', 'd7', 'd8', 'd9', 'd10', 'd11'], ['rad1', 'rad2', '|', 'dia1', 'dia2', 'back']] },
]
const sizes = { '0 0 20 16': [20, 16], '0 0 20 20': [20, 20], '0 0 18 16': [18, 16] }
const size = (n) => sizes[icons[n][0]] || [16, 16]
const snaps = [['snap', 1], ['s1', 1], ['s2', 1], ['s3', 0], ['s4', 1], ['s5', 0], ['s6', 1], ['s7', 0], ['s8', 1], ['s9', 1], ['s10', 0], ['s11', 0]]
const views = [['v1', 0], ['v2', 0], ['v3', 0], ['v4', 1], ['v5', 1], ['bcube', 1], ['v6', 1]]
const menu = [
  { i: 'layerSet', t: '图层设置', k: 'S', e: '...', s: 'Ctrl+L' },
  { i: 'layerView', t: '视图中可见图层', k: 'V', e: '...' },
  { i: 'layers', t: '图层类别', k: 'C', e: '...' },
  null,
  { i: 'layerMove', t: '移动至图层', k: 'M', e: '...' },
  { i: 'layerCopy', t: '复制至图层', k: 'O', e: '...' },
  null,
  { w: true, sub: true },
  null,
  { t: '引用集', k: 'R', e: '...' },
  null,
  { t: '部件模块', k: 'U', e: '', sub: true },
  { t: '组', k: 'G', e: '', sub: true },
  null,
  { i: 'partsList', t: '零件明细表级别', k: 'P', e: '...' },
  null,
  { t: '模式', k: 'P', e: '...' },
]
const tree = [
  { icon: 'clock', t: '历史记录模式', first: true },
  { icon: 'model', t: '模型视图', x: '+' },
  { icon: 'camera', t: '摄像机', x: '+', ok: true },
  { icon: 'folder', t: '组', x: '+' },
  { icon: 'folder', t: '模型历史记录', x: '-', end: true },
  { icon: 'block', t: '块 (0)', child: true, dim: true },
  { icon: 'block', t: '块 (1)', child: true },
  { icon: 'skt', t: '草图 (2) "SKETC...', child: true },
  { icon: 'skt', t: '草图 (3) "SKET...', child: true, bold: true, end: true },
]
const side = ['asm', 'mirror', 'partNav', 'books', 'info', 'doc', 'bigClock', 'rainbow', 'wand', 'robot', 'gallery']
</script>

<template>
  <div class="app">
    <header class="title-bar">
      <div class="title-row">
        <Ic n="logo" :w="27" :t="20" class="logo" />
        <i class="vs"></i>
        <button class="qb" aria-label="保存"><Ic n="save" /></button><i class="vs"></i>
        <button class="qb" aria-label="撤消"><Ic n="undo" /></button><i class="caret qc"></i>
        <button class="qb" aria-label="重做"><Ic n="redo" /></button><i class="vs"></i>
        <button class="qb" aria-label="剪切"><Ic n="cut" /></button>
        <button class="qb" aria-label="复制"><Ic n="copy" /></button>
        <button class="qb" aria-label="粘贴"><Ic n="paste" /></button><i class="vs"></i>
        <button class="qb" aria-label="重复命令"><Ic n="ghost" /></button><i class="caret qc"></i><i class="vs"></i>
        <button class="qb" aria-label="格式刷"><Ic n="brush" :w="17" /></button><i class="vs"></i>
        <button class="qb" aria-label="窗口"><Ic n="win" /></button>
        <button class="mb">窗口<i class="caret"></i></button>
        <button class="mb">编辑(<u>E</u>)<i class="caret"></i></button><i class="vs"></i>
        <button class="mb ins">插入(<u>S</u>)<i class="caret"></i></button>
        <button class="mb fmt" aria-expanded="true">格式(<u>R</u>)<i class="caret"></i></button>
        <i class="caret bar over"></i>
        <h1 class="doc-title">NX 10 - 建模 - [导入.prt]</h1>
        <span class="brand">SIEMENS</span>
        <div class="win-ctl gray">
          <button aria-label="最小化"><Ic n="min" :w="14" /></button>
          <button aria-label="还原"><Ic n="restore" :w="14" /></button>
          <button aria-label="关闭"><Ic n="close" :w="14" /></button>
        </div>
      </div>
    </header>

    <div class="menu" role="menu">
      <template v-for="(m, i) in menu" :key="i">
        <hr v-if="!m" />
        <button v-else role="menuitem">
          <span class="mi"><Ic v-if="m.i" :n="m.i" /></span>
          <span v-if="m.w"><u>W</u>CS</span>
          <span v-else>{{ m.t }}(<u>{{ m.k }}</u>){{ m.e }}</span>
          <span v-if="m.s" class="sc">{{ m.s }}</span>
          <i v-if="m.sub" class="sub"></i>
        </button>
      </template>
    </div>

    <nav class="tabs">
      <button class="file">文件(F)</button>
      <button v-for="(t, i) in tabs" :key="t" class="tab" :class="{ on: i === 0 }">{{ t }}</button>
      <div class="search">
        <input type="text" placeholder="查找命令" aria-label="查找命令" />
        <Ic n="mag" />
      </div>
      <div class="tab-ctl">
        <button aria-label="全屏"><Ic n="fit" /></button>
        <button aria-label="最小化功能区"><Ic n="up2" :w="15" /></button>
        <button aria-label="帮助"><Ic n="help" /></button>
      </div>
      <div class="win-ctl">
        <button aria-label="最小化"><Ic n="min" :w="14" /></button>
        <button aria-label="还原"><Ic n="restore" :w="14" /></button>
        <button aria-label="关闭"><Ic n="close" :w="14" /></button>
      </div>
    </nav>

    <section class="ribbon">
      <div class="group g-sketch">
        <div class="body">
          <button class="big"><Ic n="sketch" :w="32" /><span>草图</span></button>
          <div class="gallery">
            <button v-for="s in sketchTools" :key="s" :aria-label="s"><Ic :n="s" :w="23" /></button>
          </div>
          <div class="scroller"><i class="caret up"></i><i class="caret"></i><i class="caret bar"></i></div>
        </div>
        <div class="foot"><span>直接草图</span><i class="caret"></i></div>
      </div>
      <div class="group g-feature">
        <div class="body">
          <button class="big"><Ic n="datum" :w="30" :t="32" /><span>基准平面</span><i class="caret"></i></button>
          <button class="big"><Ic n="extrude" :w="32" /><span>拉伸</span><i class="caret"></i></button>
          <button class="big"><Ic n="hole" :w="32" /><span>孔</span></button>
          <div class="col">
            <button><Ic n="pattern" />阵列特征</button>
            <button><Ic n="unite" />合并<i class="caret"></i></button>
            <button><Ic n="shell" />抽壳</button>
          </div>
          <button class="big"><Ic n="blend" :w="32" /><span>边倒圆</span><i class="caret"></i></button>
        </div>
        <div class="foot mid"><span>特征</span><i class="caret"></i></div>
      </div>
      <div class="group g-sync">
        <div class="body">
          <div class="col">
            <button><Ic n="face1" />偏置区域</button>
            <button><Ic n="face2" />替换面</button>
            <button><Ic n="face3" />删除面</button>
          </div>
          <button class="big more"><span class="more-box"><Ic n="more" /></span><span>更多</span><i class="caret"></i></button>
        </div>
        <div class="foot mid"><span>同步建模</span><i class="caret"></i></div>
      </div>
      <div class="group g-surf">
        <div class="body">
          <button class="big"><Ic n="surface" :w="32" /><span>曲面</span><i class="caret"></i></button>
        </div>
      </div>
      <div v-for="g in gcGroups" :key="g.cls" class="group gc" :class="g.cls">
        <div class="rows">
          <div v-for="(r, ri) in g.rows" :key="ri" class="trow">
            <template v-for="(n, k) in r" :key="k">
              <i v-if="n === '|'" class="rs"></i>
              <button v-else class="tool" :aria-label="n"><Ic :n="n" :w="size(n)[0]" :t="size(n)[1]" /></button>
            </template>
          </div>
        </div>
        <div class="foot"><span>{{ g.label }}</span><i class="caret"></i></div>
      </div>
      <div class="group g-insert">
        <div class="body">
          <button class="big"><span class="blank"></span><span>插入(<u>S</u>)</span><i class="caret"></i></button>
        </div>
      </div>
      <i class="caret end"></i>
    </section>

    <section class="sel-bar">
      <button class="menu-btn"><Ic n="menuI" />菜单(<u>M</u>)<i class="caret"></i></button>
      <i class="bs"></i>
      <div class="sel sel-a"><select aria-label="选择过滤器"><option>没有选择过滤器</option></select><i class="caret lg"></i></div>
      <div class="sel sel-b"><select aria-label="选择范围"><option>整个装配</option></select><i class="caret lg"></i></div>
      <Ic n="filt" class="filt" />
      <div class="snaps">
        <button aria-label="体"><Ic n="bcube" /></button>
        <button v-for="s in snaps" :key="s[0]" :class="{ on: s[1] }" :aria-label="s[0]"><Ic :n="s[0]" :w="size(s[0])[0]" :t="size(s[0])[1]" /></button>
      </div>
      <i class="bs"></i>
      <div class="views">
        <template v-for="v in views" :key="v[0]">
          <button :aria-label="v[0]"><Ic :n="v[0]" :w="size(v[0])[0]" :t="size(v[0])[1]" /></button><i v-if="v[1]" class="caret vc"></i>
        </template>
      </div>
      <i class="bs"></i>
      <i class="caret end"></i>
    </section>

    <main class="work">
      <div class="canvas">
        <svg class="scene" width="100%" height="100%">
          <rect x="879.500" y="109.500" width="146" height="146" fill="#a3b5bb" stroke="#5f6d70" />
          <path d="M1025.500 109v147" stroke="#222" />
          <path d="M967 314L1162 162" stroke="#3f5cff" stroke-width="1.800" />
          <path d="M734 344l3 17-2 33h-2l-2-33z" fill="#2f9430" />
          <path d="M738 401l36-3 17 3-17 3z" fill="#d92f2f" />
          <path d="M738 401.500h53l-17 2z" fill="#8e1c1c" />
          <circle cx="734" cy="401" r="2.500" fill="#0a35d0" />
          <g class="axis">
            <text x="738" y="344" fill="#2f9430">YC</text>
            <text x="776" y="397" fill="#d92f2f">XC</text>
            <text x="734" y="402" fill="#1a45e8">ZC</text>
          </g>
          <path d="M46.500 711.500h25v25h-25z" fill="#d0d2d2" stroke="#b0b2b2" />
          <path d="M46 737v-25" stroke="#8fb08f" stroke-width="3" />
          <path d="M46 712v-10" stroke="#2f9430" stroke-width="3" />
          <path d="M46 694l3 10h-6z" fill="#2f9430" />
          <path d="M46 737.500h26" stroke="#c08a8c" stroke-width="3" />
          <path d="M72 737h8" stroke="#d92f2f" stroke-width="3" />
          <path d="M78 734l12 3-12 3z" fill="#d92f2f" />
          <circle cx="46" cy="737" r="4" fill="#1545e8" />
          <path d="M43 735l3 2-2 3" stroke="#223" fill="none" />
          <g class="axis small">
            <text x="43" y="693" fill="#2f9430">Y</text>
            <text x="91" y="742" fill="#d92f2f">X</text>
          </g>
        </svg>
      </div>

      <aside class="panel">
        <h2 class="panel-title"><Ic n="frame" />部件导航器</h2>
        <div class="tree-box">
          <div class="tree-clip">
            <table class="grid tree">
              <colgroup><col class="c-name" /><col class="c-new" /><col /></colgroup>
              <thead><tr><th>名称<i class="sort"></i></th><th>最新</th><th>附注</th></tr></thead>
              <tbody>
                <tr v-for="(r, i) in tree" :key="i">
                  <td>
                    <div class="node" :class="{ child: r.child, first: r.first, end: r.end }">
                      <template v-if="!r.child">
                        <span v-if="r.x" class="exp" :class="{ minus: r.x === '-' }"></span>
                        <span v-else class="exp none"></span>
                      </template>
                      <label v-if="r.child" class="chk"><input type="checkbox" checked :aria-label="r.t" /><Ic n="ok" :w="12" /></label>
                      <Ic v-if="r.ok" n="ok" :w="14" class="lead" />
                      <Ic :n="r.icon" :w="16" class="nic" />
                      <span :class="{ dim: r.dim, bold: r.bold }">{{ r.t }}</span>
                    </div>
                  </td>
                  <td><Ic v-if="r.child" n="ok" :w="14" class="okc" /></td>
                  <td></td>
                </tr>
                <tr v-for="n in 5" :key="'e' + n"><td></td><td></td><td></td></tr>
              </tbody>
            </table>
          </div>
          <div class="hscroll">
            <button aria-label="向左"><svg width="8" height="12" viewBox="0 0 8 12"><path d="M7 1L2 6l5 5" fill="none" stroke="#444" stroke-width="2" /></svg></button>
            <div class="track"><div class="thumb"></div></div>
            <button aria-label="向右"><svg width="8" height="12" viewBox="0 0 8 12"><path d="M1 1l5 5-5 5" fill="none" stroke="#444" stroke-width="2" /></svg></button>
          </div>
        </div>
        <div class="splitter"></div>
        <button class="sect">相依性<Ic n="chevD" :w="16" :t="14" /></button>
        <div class="details">
          <button class="sect">细节<Ic n="chevU" :w="16" :t="14" /></button>
          <div class="det-box">
            <table class="grid det">
              <colgroup><col class="c-par" /><col class="c-val" /><col class="c-exp" /><col /></colgroup>
              <thead><tr><th>参数</th><th>值</th><th>表达式<i class="sort"></i></th><th></th></tr></thead>
              <tbody><tr v-for="n in 12" :key="n"><td></td><td></td><td></td><td></td></tr></tbody>
            </table>
          </div>
        </div>
        <button class="sect last">预览<Ic n="chevD" :w="16" :t="14" /></button>
      </aside>

      <nav class="side">
        <button class="cog" aria-label="资源条选项"><Ic n="cog" :w="20" /></button>
        <button v-for="s in side" :key="s" :class="['sb', 'sb-' + s]" :aria-label="s"><Ic :n="s" :w="24" /></button>
      </nav>
    </main>

    <div class="status">
      <Ic n="flag" /><Ic n="fit" />
    </div>

    <footer class="taskbar">
      <button class="sys" aria-label="开始"><Ic n="start" :w="20" /></button>
      <button class="sys" aria-label="搜索"><Ic n="tsearch" :w="20" /></button>
      <button class="sys" aria-label="Cortana"><Ic n="cortana" :w="20" /></button>
      <button class="sys" aria-label="任务视图"><Ic n="taskview" :w="20" /></button>
      <button class="app-btn" aria-label="VS Code"><Ic n="code" :w="30" /></button>
      <button class="app-btn" aria-label="Typora"><Ic n="typora" :w="30" /></button>
      <button class="app-btn" aria-label="照片"><Ic n="photo" :w="26" /></button>
      <button class="app-btn cur" aria-label="NX"><Ic n="nx" :w="30" /></button>
      <div class="tray">
        <Ic n="tup" :w="17" :t="10" class="t1" />
        <Ic n="batt" :w="20" :t="16" class="t2" />
        <Ic n="wifi" class="t3" />
        <Ic n="vol" :w="20" :t="16" class="t4" />
        <span class="ime">中</span>
        <div class="time"><span>23:29</span><span>2023/9/13</span></div>
        <button class="action" aria-label="通知"><Ic n="action" :w="20" /><b>5</b></button>
      </div>
    </footer>
  </div>
</template>

<style>
html, body { margin: 0; background: #fff; }
</style>

<style scoped>
.app, .app * { box-sizing: border-box; }
.app { position: relative; display: flex; flex-direction: column; height: 100vh; overflow: hidden; font-family: "Noto Sans", "Noto Sans CJK SC", sans-serif; font-size: 14px; line-height: 20px; color: #222; }
button { font: inherit; color: inherit; background: none; border: 0; padding: 0; margin: 0; white-space: nowrap; }
svg { display: block; flex: none; }
h1, h2 { margin: 0; font-weight: 400; }
u { text-underline-offset: 2px; }
.caret { flex: none; width: 6px; height: 3px; background: #222; clip-path: polygon(0 0, 100% 0, 50% 100%); }
.caret.bar { height: 6px; clip-path: polygon(0 0, 100% 0, 100% 1px, 0 1px, 0 3px, 100% 3px, 50% 100%, 0 3px); }

.title-bar { display: flex; align-items: flex-end; height: 19px; flex: none; overflow: hidden; }
.title-row { display: flex; align-items: center; flex: 1; height: 30px; }
.vs { width: 1px; height: 26px; margin: 0 3px; background: #d4d4d4; flex: none; }
.qb { width: 23px; display: flex; justify-content: center; flex: none; }
.qc { margin: 0 2px; }
.mb { display: flex; align-items: center; flex: none; }
.mb .caret { margin: 0 4px; }
.ins { padding-left: 2px; }
.fmt { height: 26px; border: 1px solid #ecc25f; background: #fdf1d3; padding: 0 0 0 3px; }
.over { margin: 0 4px 0 3px; }
.doc-title { flex: 1; text-align: center; font-size: 16px; color: #111; padding-left: 4px; }
.brand { font-size: 16px; font-weight: 700; color: #009a93; }
.win-ctl { display: flex; gap: 14px; padding: 0 12px 0 14px; color: #222; }
.win-ctl button { width: 14px; }
.title-row .win-ctl { padding-left: 30px; gap: 15px; padding-right: 9px; }
.win-ctl.gray { color: #666; }

.menu { position: absolute; z-index: 5; left: 464px; top: 17px; width: 192px; padding: 3px 0 1px; background: #fff; border: 1px solid #a8a8a8; box-shadow: 3px 3px 3px rgba(0, 0, 0, .5); }
.menu button { display: flex; align-items: center; width: 100%; height: 22px; }
.mi { width: 29px; padding-left: 5px; flex: none; }
.menu hr { height: 1px; margin: 2px 12px 6px; border: 0; background: #d9d9d9; }
.sc { margin-left: 15px; }
.sub { margin-left: auto; margin-right: 6px; width: 4px; height: 8px; background: #222; clip-path: polygon(0 0, 100% 50%, 0 100%); }

.tabs { display: flex; align-items: stretch; height: 32px; flex: none; background: #c8d8d6; font-size: 16px; }
.file { width: 73px; margin-right: 2px; background: #5b8983; color: #fff; text-align: left; padding-left: 1px; }
.tab { width: 58px; }
.tab.on { background: #fff; color: #2b87bd; border-top: 1px solid #aaa; border-left: 1px solid #aaa; }
.search { display: flex; align-items: center; align-self: center; width: 158px; height: 24px; margin-left: auto; background: #fff; border: 1px solid #a8a8a8; padding-right: 4px; }
.search input { flex: 1; min-width: 0; border: 0; outline: 0; padding: 0 1px; background: none; font: inherit; font-size: 14px; }
.search input::placeholder { color: #a9a9a9; opacity: 1; }
.tab-ctl { display: flex; align-items: center; gap: 10px; margin-left: 10px; }
.tabs .win-ctl { align-items: center; padding-left: 10px; gap: 12px; }

.ribbon { display: flex; height: 106px; flex: none; padding-top: 5px; border-bottom: 1px solid #dadada; overflow: hidden; }
.group { display: flex; flex-direction: column; height: 97px; flex: none; border-right: 1px solid #dadada; }
.body { display: flex; flex: 1; }
.foot { display: flex; align-items: center; height: 14px; color: #2b87bd; white-space: nowrap; }
.foot span { flex: 1; text-align: center; min-width: 0; }
.foot .caret { margin: 0 7px 0 4px; }
.foot.mid { padding-left: 17px; }
.big { display: flex; flex-direction: column; align-items: center; min-width: 30px; align-self: flex-start; }
.big > span:not(.blank, .more-box) { margin-top: 5px; }
.big .caret { margin-top: 4px; }
.col { display: flex; flex-direction: column; gap: 6px; }
.col button { display: flex; align-items: center; gap: 4px; }
.col .caret { margin-left: 6px; }
.g-sketch { width: 201px; margin-left: -19px; }
.g-sketch .body { padding-left: 14px; }
.gallery { display: grid; grid-template-columns: repeat(3, 1fr); width: 117px; height: 79px; margin-left: 12px; border: 1px solid #cfcfcf; }
.gallery button { display: flex; align-items: center; justify-content: center; }
.scroller { display: flex; flex-direction: column; align-items: center; gap: 22px; width: 20px; padding-top: 11px; }
.scroller .up { background: #aaa; transform: rotate(180deg); }
.g-sketch .foot { padding-left: 0; }
.g-feature { width: 389px; }
.g-feature .body { gap: 9px; padding-left: 12px; }
.g-sync { width: 215px; }
.g-sync .body { justify-content: flex-end; gap: 11px; padding-right: 4px; }
.more-box { display: flex; align-items: center; justify-content: center; width: 38px; height: 34px; margin-bottom: -2px; border: 1px solid #e6e6e6; border-radius: 3px; }
.g-surf { width: 43px; }
.g-surf .body, .g-insert .body { justify-content: center; }
.rows { flex: 1; padding: 2px 0 0 3px; }
.trow { display: flex; align-items: center; height: 31px; }
.tool { display: flex; align-items: center; justify-content: center; width: 23px; height: 23px; flex: none; }
.rs { width: 1px; height: 18px; margin: 0 2px; background: #d4d4d4; }
.gc .foot span { text-align: left; padding-left: 1px; }
.gc.g-dim .foot span { padding-left: 33px; }
.gc.g-spring .foot span { padding-left: 5px; }
.g-std { width: 104px; }
.g-gear { width: 52px; }
.g-spring { width: 58px; }
.g-cam { width: 52px; }
.g-model { width: 98px; }
.g-asm { width: 29px; }
.g-dim { width: 288px; }
.g-insert { width: 64px; }
.blank { width: 32px; height: 32px; border: 1px solid #8c8c8c; }
.ribbon .end { margin: auto 6px 7px auto; }

.sel-bar { display: flex; align-items: center; height: 36px; flex: none; border-bottom: 1px solid #83898f; }
.menu-btn { display: flex; align-items: center; width: 79px; margin-left: -8px; box-sizing: content-box; }
.menu-btn svg { margin-right: 4px; }
.menu-btn .caret { margin-left: 5px; }
.bs { width: 1px; height: 28px; background: #dadada; flex: none; }
.sel { display: flex; align-items: center; position: relative; height: 24px; flex: none; }
.sel select { appearance: none; width: 100%; height: 24px; padding: 0 0 0 2px; background: #fff; border: 1px solid #a3a3a3; border-radius: 0; font: inherit; color: #222; }
.lg { position: absolute; right: 8px; width: 8px; height: 4px; }
.sel-a { width: 167px; margin-left: 20px; }
.sel-b { width: 176px; margin-left: 8px; }
.filt { margin-left: 8px; }
.snaps { display: flex; gap: 2px; margin: 0 6px 0 178px; }
.snaps button { display: flex; align-items: center; justify-content: center; width: 23px; height: 22px; border: 1px solid transparent; }
.snaps .on { background: #c8d8d6; border-color: #a5c1bd; }
.views { display: flex; align-items: center; margin: 0 6px 0 7px; }
.views button { display: flex; justify-content: center; width: 25px; }
.vc { margin: 0 3px; }
.sel-bar .end { margin: 18px 6px 0 auto; }

.work { display: flex; flex: 1; min-height: 0; border-bottom: 1px solid #ababab; }
.canvas { flex: 1; min-width: 0; background: linear-gradient(#b3b4b6, #e5e6e8 75%, #e7e8ea); border-right: 1px solid #83898f; overflow: hidden; }
.axis { font-size: 13px; }
.axis.small { font-size: 11px; }
.panel { display: flex; flex-direction: column; width: 383px; padding: 0 6px 6px 9px; flex: none; }
.panel-title { display: flex; align-items: center; gap: 10px; height: 31px; padding: 1px 0 0 3px; font-size: 15px; flex: none; }
.tree-box { display: flex; flex-direction: column; height: 371px; padding: 1px; border: 1px solid #d9d9d9; flex: none; }
.tree-clip { flex: 1; min-height: 0; overflow: hidden; }
.grid { width: 100%; table-layout: fixed; border-collapse: separate; border-spacing: 0; font-size: 15px; }
.grid th { height: 24px; padding: 0 0 0 6px; background: #efefef; border-right: 1px solid #d4d4d4; border-bottom: 1px solid #cfcfcf; text-align: left; font-weight: 400; line-height: 22px; white-space: nowrap; }
.grid td { height: 24px; padding: 0; border-right: 1px solid #e9e9e9; border-bottom: 1px solid #e9e9e9; }
.grid th:last-child, .grid td:last-child { border-right: 0; }
.grid tbody tr:nth-child(even) { background: #fafafa; }
.c-name { width: 200px; }
.c-new { width: 100px; }
.c-par { width: 64px; }
.c-val { width: 40px; }
.c-exp { width: 88px; }
.sort { display: inline-block; width: 10px; height: 5px; margin-left: 18px; vertical-align: 3px; background: #222; clip-path: polygon(50% 0, 100% 100%, 0 100%); }
.node { position: relative; display: flex; align-items: center; height: 23px; padding-left: 4px; white-space: nowrap; }
.node::before { content: ""; position: absolute; left: 9px; top: 0; bottom: -1px; border-left: 1px dotted #999; }
.node::after { content: ""; position: absolute; left: 9px; width: 9px; top: 11px; border-top: 1px dotted #999; }
.node.first::before { top: 12px; }
.node.end::before { bottom: 12px; }
.node.child { padding-left: 40px; }
.node.child::before { left: 28px; }
.node.child::after { left: 28px; }
.exp { position: relative; z-index: 1; width: 11px; height: 11px; margin-right: 4px; border: 1px solid #d0d0d0; background: linear-gradient(#222, #222) center / 7px 1px no-repeat, linear-gradient(#222, #222) center / 1px 7px no-repeat, #fff; }
.exp.minus { background: linear-gradient(#222, #222) center / 7px 1px no-repeat, #fff; }
.exp.none { visibility: hidden; }
.chk { display: grid; width: 12px; height: 12px; margin-right: 3px; }
.chk input, .chk svg { grid-area: 1 / 1; }
.chk input { appearance: none; width: 12px; height: 12px; margin: 0; border: 1px solid #111; background: #fff; }
.lead { margin-right: 2px; }
.nic { margin-right: 3px; }
.child .nic { margin-right: 2px; }
.dim { color: #a3a3a3; }
.bold { font-weight: 700; }
.okc { margin-left: 5px; }
.hscroll { display: flex; height: 20px; margin-top: 1px; background: #f0f0f0; flex: none; }
.hscroll button { display: flex; align-items: center; justify-content: center; width: 21px; }
.track { flex: 1; }
.thumb { width: 91%; height: 19px; background: #cbcbcb; }
.splitter { height: 5px; border: 1px solid #aaa; background: #dcdcdc; flex: none; }
.sect { display: flex; align-items: center; justify-content: space-between; width: 100%; padding: 2px 5px 0 7px; height: 26px; font-size: 18px; color: #2b87bd; flex: none; }
.sect svg { margin-bottom: 2px; }
.sect + .details { border-top: 3px solid #d4d4d4; }
.details { display: flex; flex-direction: column; flex: 1; min-height: 0; border: 1px solid #d9d9d9; }
.details .sect { height: 27px; padding: 0 4px 2px 6px; margin-bottom: 4px; }
.details .sect svg { margin-bottom: 0; }
.det-box { flex: 1; min-height: 0; margin: 0 6px 7px; padding: 1px; border: 1px solid #d4d4d4; overflow: hidden; }
.last { height: 28px; border-bottom: 2px solid #d4d4d4; }
.det .sort { margin-left: 17px; }
.side { display: flex; flex-direction: column; align-items: flex-start; width: 32px; background: #dcdcdc; flex: none; box-shadow: inset 1px 0 #a9a9a9; }
.side button { display: flex; align-items: center; justify-content: center; width: 28px; height: 42px; }
.side .cog { width: 34px; height: 27px; margin-bottom: 15px; }
.side .sb-mirror { height: 40px; }
.side .sb-partNav { width: 29px; height: 45px; padding-right: 1px; background: #fff; border: 1px solid #a9a9a9; border-left: 0; }
.side .sb-info, .side .sb-doc, .side .sb-bigClock { height: 54px; }
.side .sb-info { margin-top: 5px; }
.side .sb-rainbow { margin-top: -6px; }

.status { display: flex; align-items: flex-start; justify-content: flex-end; gap: 4px; height: 22px; padding: 2px 55px 0 0; flex: none; }

.taskbar { display: flex; height: 50px; flex: none; background: #1b2b30; color: #fff; }
.sys { display: flex; align-items: center; justify-content: center; width: 60px; }
.sys:first-child { width: 42px; padding-right: 18px; }
.app-btn { display: flex; align-items: center; justify-content: center; width: 51px; margin-right: 11px; padding-right: 2px; border-bottom: 3px solid #a9ecfb; border-top: 3px solid transparent; }
.sys + .app-btn { margin-left: 9px; }
.app-btn:nth-child(7) { margin-right: 6px; }
.app-btn.cur { width: 61px; margin: 0; background: linear-gradient(90deg, #48565b 56px, #1b2b30 56px, #1b2b30 57px, #3b4a4f 57px); background-origin: border-box; }
.tray { display: flex; align-items: center; margin-left: auto; border-right: 1px solid #7c878a; margin-right: 5px; }
.t2 { margin-left: 11px; }
.t3 { margin-left: 13px; }
.t4 { margin-left: 10px; }
.ime { margin: 0 13px 0 9px; font-size: 19px; font-weight: 500; }
.time { display: flex; flex-direction: column; align-items: center; font-size: 16px; line-height: 23px; }
.action { position: relative; display: flex; margin: 0 26px 0 24px; }
.action b { position: absolute; left: 10px; top: 9px; width: 20px; height: 20px; border: 1px solid #888; border-radius: 50%; background: #333; font-size: 14px; line-height: 18px; text-align: center; }
</style>
